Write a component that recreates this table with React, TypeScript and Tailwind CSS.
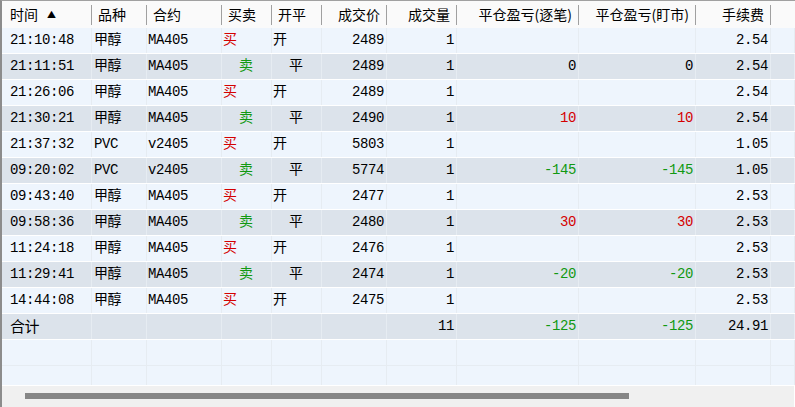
import React from "react";

type Row = {
  time: string;
  name: string;
  code: string;
  side: "买" | "卖";
  pos: "开" | "平";
  price: string;
  qty: string;
  pnl1: string;
  pnl2: string;
  fee: string;
};

const rows: Row[] = [
  { time: "21:10:48", name: "甲醇", code: "MA405", side: "买", pos: "开", price: "2489", qty: "1", pnl1: "", pnl2: "", fee: "2.54" },
  { time: "21:11:51", name: "甲醇", code: "MA405", side: "卖", pos: "平", price: "2489", qty: "1", pnl1: "0", pnl2: "0", fee: "2.54" },
  { time: "21:26:06", name: "甲醇", code: "MA405", side: "买", pos: "开", price: "2489", qty: "1", pnl1: "", pnl2: "", fee: "2.54" },
  { time: "21:30:21", name: "甲醇", code: "MA405", side: "卖", pos: "平", price: "2490", qty: "1", pnl1: "10", pnl2: "10", fee: "2.54" },
  { time: "21:37:32", name: "PVC", code: "v2405", side: "买", pos: "开", price: "5803", qty: "1", pnl1: "", pnl2: "", fee: "1.05" },
  { time: "09:20:02", name: "PVC", code: "v2405", side: "卖", pos: "平", price: "5774", qty: "1", pnl1: "-145", pnl2: "-145", fee: "1.05" },
  { time: "09:43:40", name: "甲醇", code: "MA405", side: "买", pos: "开", price: "2477", qty: "1", pnl1: "", pnl2: "", fee: "2.53" },
  { time: "09:58:36", name: "甲醇", code: "MA405", side: "卖", pos: "平", price: "2480", qty: "1", pnl1: "30", pnl2: "30", fee: "2.53" },
  { time: "11:24:18", name: "甲醇", code: "MA405", side: "买", pos: "开", price: "2476", qty: "1", pnl1: "", pnl2: "", fee: "2.53" },
  { time: "11:29:41", name: "甲醇", code: "MA405", side: "卖", pos: "平", price: "2474", qty: "1", pnl1: "-20", pnl2: "-20", fee: "2.53" },
  { time: "14:44:08", name: "甲醇", code: "MA405", side: "买", pos: "开", price: "2475", qty: "1", pnl1: "", pnl2: "", fee: "2.53" },
];

const cols = "grid grid-cols-[90px_55px_75px_50px_50px_65px_70px_122px_117px_75px_1fr]";

function pnlColor(v: string) {
  if (v.startsWith("-")) return "text-[#119911]";
  if (v !== "" && v !== "0") return "text-[#d40000]";
  return "text-black";
}

function HeadCell({ label, right, first }: { label?: React.ReactNode; right?: boolean; first?: boolean }) {
  return (
    <div className="flex items-center">
      <div className={`flex-1 whitespace-nowrap ${right ? "text-right pr-[6px]" : first ? "pl-2" : "pl-[6px]"}`}>
        {label}
      </div>
      <div className="w-px h-[20px] bg-[#a0a0a0]" />
    </div>
  );
}

function Cell({ children, className = "" }: { children?: React.ReactNode; className?: string }) {
  return (
    <div className={`border-r border-[#e6ecf2] flex items-center whitespace-nowrap overflow-hidden ${className}`}>
      {children}
    </div>
  );
}

export default function App() {
  const mono = "font-['Liberation_Mono','Noto_Sans_CJK_SC',monospace] text-[14px] tracking-[-0.4px]";
  return (
    <div className="w-[795px] h-[407px] flex flex-col border-t border-[#a0a0a0] border-l-2 border-l-[#8c8c8c] bg-[#eef5fd] overflow-hidden text-black">
      <div className={`${cols} h-[27px] shrink-0 bg-[#fafafa] font-['Noto_Sans_CJK_SC',sans-serif] text-[14px]`}>
        <HeadCell
          first
          label={
            <span>
              时间<span className="ml-[9px] text-[9px] align-[2px]">▲</span>
            </span>
          }
        />
        <HeadCell label="品种" />
        <HeadCell label="合约" />
        <HeadCell label="买卖" />
        <HeadCell label="开平" />
        <HeadCell label="成交价" right />
        <HeadCell label="成交量" right />
        <HeadCell label="平仓盈亏(逐笔)" right />
        <HeadCell label="平仓盈亏(盯市)" right />
        <HeadCell label="手续费" right />
        <div />
      </div>

      <div className={`flex-1 overflow-hidden ${mono}`}>
        {rows.map((r, i) => (
          <div
            key={i}
            className={`${cols} h-[26px] border-b border-white ${i % 2 === 0 ? "bg-[#eef5fd]" : "bg-[#dce3eb]"}`}
          >
            <Cell className="pl-2">{r.time}</Cell>
            <Cell className="pl-[2px]">{r.name}</Cell>
            <Cell className="pl-[1px]">{r.code}</Cell>
            <Cell className={r.side === "买" ? "pl-[1px] text-[#d40000]" : "pl-[17px] text-[#119911]"}>{r.side}</Cell>
            <Cell className={r.pos === "开" ? "pl-[1px]" : "pl-[17px]"}>{r.pos}</Cell>
            <Cell className="justify-end pr-[2px]">{r.price}</Cell>
            <Cell className="justify-end pr-[2px]">{r.qty}</Cell>
            <Cell className={`justify-end pr-[2px] ${pnlColor(r.pnl1)}`}>{r.pnl1}</Cell>
            <Cell className={`justify-end pr-[2px] ${pnlColor(r.pnl2)}`}>{r.pnl2}</Cell>
            <Cell className="justify-end pr-[2px]">{r.fee}</Cell>
            <Cell />
          </div>
        ))}
        <div className={`${cols} h-[26px] border-b border-white bg-[#dce3eb]`}>
          <Cell className="pl-2 font-['Noto_Sans_CJK_SC',sans-serif] text-[15px]">合计</Cell>
          <Cell />
          <Cell />
          <Cell />
          <Cell />
          <Cell />
          <Cell className="justify-end pr-[2px]">11</Cell>
          <Cell className="justify-end pr-[2px] text-[#119911]">-125</Cell>
          <Cell className="justify-end pr-[2px] text-[#119911]">-125</Cell>
          <Cell className="justify-end pr-[2px]">24.91</Cell>
          <Cell />
        </div>
        {[0, 1].map((k) => (
          <div key={k} className={`${cols} h-[26px] border-b border-[#e6ecf2] bg-[#eef5fd]`}>
            {Array.from({ length: 11 }).map((_, j) => (
              <Cell key={j} />
            ))}
          </div>
        ))}
      </div>

      <div className="h-[22px] shrink-0 border-t border-white border-r bg-[#f0f0f0] pt-[7px]">
        <div className="ml-[23px] w-[604px] h-[6px] bg-[#868686]" />
      </div>
    </div>
  );
}
